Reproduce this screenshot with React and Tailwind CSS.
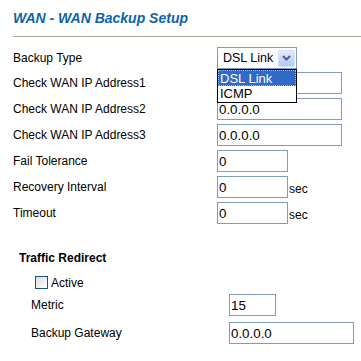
import React from "react";

const font = "font-['Liberation_Sans',Arial,sans-serif]";

function TextBox({ value, w }) {
  return (
    <input
      readOnly
      value={value}
      className={`${font} h-[22px] ${w} border border-[#7f9db9] bg-white px-[1px] text-[13.33px] leading-[20px] text-black outline-none`}
    />
  );
}

function Row({ label, children, labelW = "w-[204px]", className = "" }) {
  return (
    <div className={`flex h-[22px] items-center ${className}`}>
      <div className={`${labelW} shrink-0 text-[12px] leading-[14px]`}>{label}</div>
      {children}
    </div>
  );
}

function SelectBox() {
  return (
    <div className="relative">
      <div className="flex h-[22px] w-[80px] items-center border border-[#7f9db9] bg-white pl-[5px] text-[12.5px] leading-[16px]">
        <span>DSL Link</span>
        <div className="ml-auto mr-[1px] flex h-[17px] w-[17px] items-center justify-center rounded-[2px] border border-[#d6e1fb] bg-gradient-to-b from-[#e1eafe] to-[#b4c8f5]">
          <svg width="9" height="6" viewBox="0 0 9 6">
            <path d="M1 1 L4.5 4.5 L8 1" fill="none" stroke="#4d6185" strokeWidth="2" />
          </svg>
        </div>
      </div>
      <div className="absolute left-0 top-full z-10 w-[80px] border border-black bg-white text-[13px] leading-[15px]">
        <div className="h-[16px] border border-dotted border-[#e8b048] bg-[#316ac5] pl-[1px] text-white">DSL Link</div>
        <div className="h-[16px] pl-[2px] text-black">ICMP</div>
      </div>
    </div>
  );
}

function WithSec({ children }) {
  return (
    <div className="flex h-[22px] items-end">
      {children}
      <span className="mb-[2px] ml-[1px] text-[12px] leading-[14px]">sec</span>
    </div>
  );
}

export default function App() {
  return (
    <div className={`${font} relative h-[361px] w-[361px] overflow-hidden bg-white text-black`}>
      <div className="pl-[13px] pt-[10px]">
        <h1 className="text-[14px] font-bold italic leading-[16px] text-[#0d65a6]">WAN - WAN Backup Setup</h1>
      </div>
      <div className="ml-[13px] mt-[10px] h-px bg-[#aca899]" />

      <div className="mt-[10px] flex flex-col gap-[4px] pl-[13px]">
        <Row label="Backup Type" className="mb-[-1px]">
          <SelectBox />
        </Row>
        <Row label="Check WAN IP Address1">
          <TextBox value="" w="w-[125px]" />
        </Row>
        <Row label="Check WAN IP Address2">
          <TextBox value="0.0.0.0" w="w-[125px]" />
        </Row>
        <Row label="Check WAN IP Address3">
          <TextBox value="0.0.0.0" w="w-[125px]" />
        </Row>
        <Row label="Fail Tolerance">
          <TextBox value="0" w="w-[71px]" />
        </Row>
        <Row label="Recovery Interval">
          <WithSec>
            <TextBox value="0" w="w-[71px]" />
          </WithSec>
        </Row>
        <Row label="Timeout">
          <WithSec>
            <TextBox value="0" w="w-[71px]" />
          </WithSec>
        </Row>
      </div>

      <div className="mt-[27px] pl-[19px] text-[12px] font-bold leading-[14px]">Traffic Redirect</div>

      <div className="ml-[35px] mt-[11px] flex h-[13px] items-center">
        <div className="h-[13px] w-[13px] border border-[#1c5180] bg-gradient-to-br from-[#dcdcd7] to-white" />
        <span className="ml-[3px] text-[12px] leading-[14px]">Active</span>
      </div>

      <div className="mt-[5px] flex flex-col gap-[6px] pl-[31px]">
        <Row label="Metric" labelW="w-[198px]">
          <TextBox value="15" w="w-[47px]" />
        </Row>
        <Row label="Backup Gateway" labelW="w-[198px]">
          <TextBox value="0.0.0.0" w="w-[125px]" />
        </Row>
      </div>
    </div>
  );
}
